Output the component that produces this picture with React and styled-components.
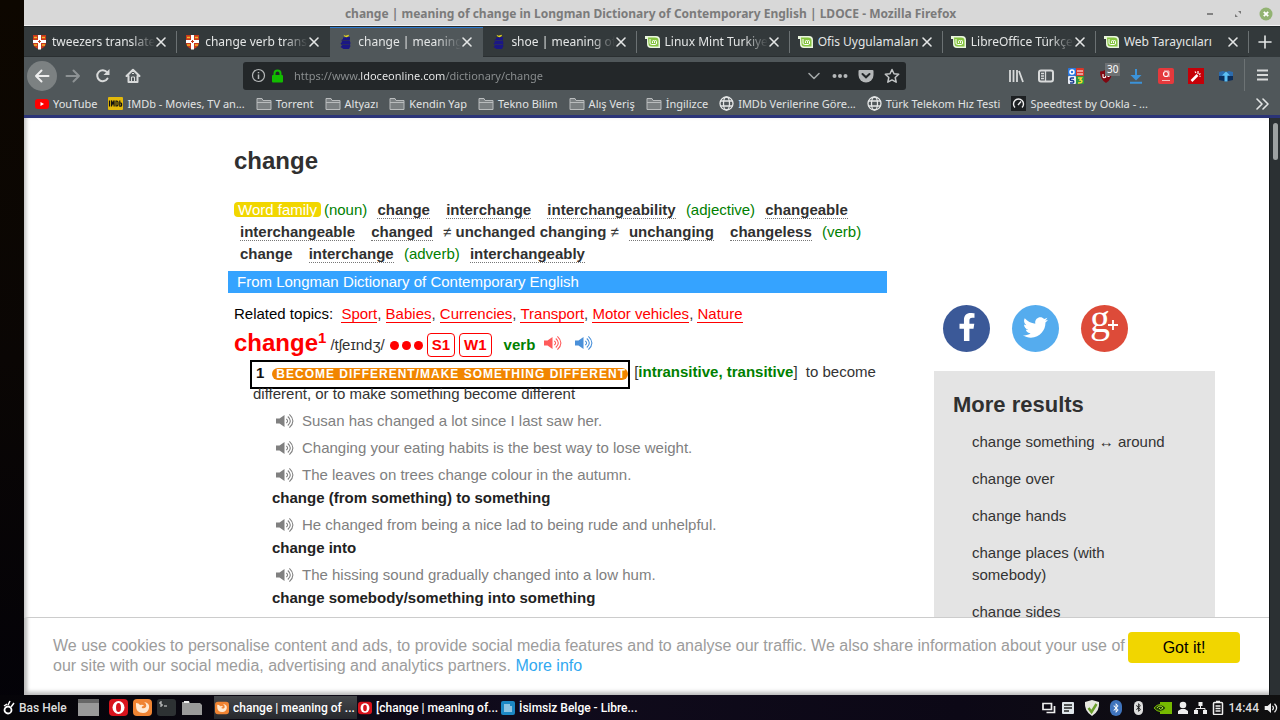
import React from "react";
import styled, { createGlobalStyle, css } from "styled-components";
import { FaFacebookF, FaTwitter, FaBluetoothB } from "react-icons/fa";

const ui = `"Noto Sans", sans-serif`;
const page = `"Liberation Sans", Arial, sans-serif`;

const Global = createGlobalStyle`
  * { box-sizing: border-box; }
  body { margin: 0; background: #050308; font-family: ${ui}; }
  button, input { font: inherit; color: inherit; }
  button { border: 0; padding: 0; background: none; cursor: pointer; }
  svg { display: block; flex: none; }
`;

const Desktop = styled.div`
  height: 100vh;
  display: flex;
  flex-direction: column;
  overflow: hidden;
  background: linear-gradient(#0d0700, #0a0604 50%, #030208);
`;
const Window = styled.div`
  flex: 1;
  min-height: 0;
  margin-left: 24px;
  display: flex;
  flex-direction: column;
  background: #fff;
`;

/* Title bar */
const TitleBar = styled.header`
  height: 26px;
  flex: none;
  display: flex;
  align-items: center;
  padding: 2px 7px 0 74px;
  background: #d8d8d8;
  border-bottom: 1px solid #f4f4f4;
  color: #7b7b7b;
`;
const WindowTitle = styled.div`
  flex: 1;
  text-align: center;
  font-size: 12px;
  line-height: 20px;
  font-weight: 700;
  white-space: nowrap;
`;
const WindowButtons = styled.div`
  display: flex;
  align-items: center;
  gap: 14px;
`;

/* Tabs */
const TabStrip = styled.nav`
  height: 31px;
  flex: none;
  display: flex;
  background: #33393b;
  border-top: 1px solid #22282a;
  color: #e4e6e6;
`;
const Tab = styled.div`
  flex: 1;
  min-width: 0;
  display: flex;
  align-items: center;
  padding: 0 10px 0 8px;
  position: relative;
  border-bottom: 1px solid #2a2f31;
  ${(p) => p.$active && css`
    background: #50575a;
    border-bottom-color: #50575a;
    box-shadow: inset 0 1px #2f7bd0;
  `}
  ${(p) => p.$line && css`
    &::after {
      content: "";
      position: absolute;
      right: 0;
      top: 4px;
      bottom: 3px;
      width: 1px;
      background: #6b7173;
    }
  `}
`;
const TabLabel = styled.button`
  flex: 1;
  min-width: 0;
  display: flex;
  align-items: center;
  gap: 5px;
`;
const TabText = styled.span`
  flex: 1;
  overflow: hidden;
  white-space: nowrap;
  text-align: left;
  font-size: 12px;
  line-height: 20px;
  ${(p) => p.$fade && "mask-image: linear-gradient(90deg, #000 calc(100% - 24px), transparent);"}
`;
const NewTab = styled.button`
  width: 31px;
  display: grid;
  place-items: center;
`;

/* Toolbar */
const Toolbar = styled.div`
  height: 37px;
  flex: none;
  display: flex;
  align-items: center;
  padding: 0 11px 0 3px;
  background: #50575a;
  color: #d8dada;
`;
const NavButtons = styled.div`
  display: flex;
  align-items: center;
  gap: 14px;
  width: 216px;
`;
const BackButton = styled.button`
  width: 30px;
  height: 30px;
  border-radius: 50%;
  background: #7c8182;
  display: grid;
  place-items: center;
  margin-right: -6px;
`;
const AddressBar = styled.div`
  flex: 1;
  height: 28px;
  display: flex;
  align-items: center;
  gap: 10px;
  padding: 0 6px 0 8px;
  border-radius: 3px;
  background: #232729;
`;
const SiteInfo = styled.div`
  display: flex;
  align-items: center;
  gap: 5px;
`;
const UrlInput = styled.input`
  flex: 1;
  min-width: 0;
  border: 0;
  padding: 0;
  outline: 0;
  font-size: 11px;
  line-height: 20px;
  color: transparent;
  background: linear-gradient(90deg, #8d9192 65px, #eff0f0 65px, #eff0f0 151px, #8d9192 151px);
  background-clip: text;
  -webkit-background-clip: text;
`;
const AddOns = styled.div`
  display: flex;
  align-items: center;
  gap: 14px;
  margin-left: 102px;
`;
const AddOn = styled.button`
  position: relative;
`;
const Badge = styled.span`
  position: absolute;
  left: 7px;
  top: -5px;
  padding: 0 2px;
  background: #6e7173;
  font-size: 10px;
  line-height: 13px;
  color: #fff;
`;
const MenuButton = styled.button`
  align-self: stretch;
  margin: 2px 0 3px 10px;
  padding-left: 11px;
  border-left: 1px solid #6d7375;
`;

const Bookmarks = styled.nav`
  height: 24px;
  flex: none;
  display: flex;
  align-items: center;
  gap: 11px;
  padding: 0 11px 2px;
  background: #50575a;
  border-bottom: 3px solid #2b3478;
  color: #e2e4e4;
`;
const Bookmark = styled.a`
  display: flex;
  align-items: center;
  gap: 4px;
  font-size: 11px;
  line-height: 18px;
  white-space: nowrap;
  color: inherit;
  text-decoration: none;
`;
const Overflow = styled.button`
  margin-left: auto;
`;

/* Page */
const Viewport = styled.div`
  flex: 1;
  min-height: 0;
  display: flex;
  background: #2b3033;
`;
const PageColumn = styled.div`
  flex: 1;
  min-width: 0;
  display: flex;
  flex-direction: column;
  background: #fff;
  font-family: ${page};
  box-shadow: inset 4px 0 4px -2px #bbb;
`;
const ScrollTrack = styled.div`
  width: 11px;
  padding: 5px 2px 0 3px;
  background: #2b3033;
  border-left: 1px solid #14181a;
`;
const ScrollThumb = styled.div`
  height: 37px;
  border-radius: 3px;
  background: #9da1a2;
`;
const Scroll = styled.main`
  flex: 1;
  min-height: 0;
  overflow: hidden;
  display: grid;
  grid-template-columns: minmax(0, 659fr) minmax(0, 281fr);
  column-gap: 47px;
  padding: 0 54px 0 204px;
  font-size: 15px;
  line-height: 22px;
  color: #333;
`;
const PageTitle = styled.h1`
  margin: 0;
  padding: 28px 0 23px 6px;
  font-size: 24px;
  line-height: 30px;
  color: #303030;
`;
const WordFamily = styled.div`
  padding-left: 6px;
  margin-bottom: 6px;
`;
const FamilyPill = styled.span`
  display: inline-block;
  line-height: 15px;
  padding: 0 4px;
  margin-right: 3px;
  border-radius: 4px;
  background: #f1d600;
  color: #fff;
`;
const Pos = styled.span`
  color: #008000;
`;
const FamilyWord = styled.a`
  margin: 0 6px;
  font-weight: 700;
  color: #303030;
  text-decoration: none;
  border-bottom: 1px dotted ${(p) => (p.$plain ? "transparent" : "#777")};
`;
const DictionaryBar = styled.div`
  padding-left: 9px;
  line-height: 22px;
  background: #35a3ff;
  color: #fff;
`;
const Topics = styled.div`
  padding: 10px 0 0 6px;
`;
const TopicsLabel = styled.span`
  margin-right: 4px;
  color: #000;
`;
const Topic = styled.a`
  color: #f00;
  text-decoration: none;
  border-bottom: 1px solid #f00;
`;
const Headword = styled.div`
  display: flex;
  align-items: center;
  height: 36px;
  padding-left: 6px;
`;
const Hyphenation = styled.h2`
  margin: 0;
  font-size: 24px;
  line-height: 28px;
  color: #f00;
  display: flex;
  align-items: flex-start;
`;
const Homograph = styled.sup`
  font-size: 15px;
  line-height: 18px;
`;
const Pron = styled.span`
  margin: 4px 5px 0 4px;
`;
const Dots = styled.span`
  display: flex;
  gap: 3px;
  margin: 4px 4px 0 0;
`;
const Dot = styled.i`
  width: 9px;
  height: 9px;
  border-radius: 50%;
  background: #f00;
`;
const Freq = styled.span`
  margin: 4px 4px 0 0;
  padding: 0 4px;
  border: 1px solid #f00;
  border-radius: 4px;
  font-weight: 700;
  color: #f00;
`;
const HeadPos = styled.span`
  margin: 4px 8px 0 8px;
  font-weight: 700;
  color: #008000;
`;
const SoundButton = styled.button`
  margin-right: ${(p) => (p.$color ? 11 : 7)}px;
  color: ${(p) => p.$color || "inherit"};
`;
const Sense = styled.div`
  padding-left: 25px;
`;
const SenseBox = styled.span`
  display: inline-flex;
  align-items: flex-start;
  vertical-align: top;
  height: 29px;
  margin: -1px 0 -6px -3px;
  padding-left: 4px;
  border: 2px solid #000;
  font-weight: 700;
  color: #111;
`;
const Signpost = styled.span`
  margin: 6px 0 0 8px;
  padding: 0 2px 0 4px;
  border-radius: 6px;
  background: #f18500;
  font-size: 12px;
  line-height: 12px;
  letter-spacing: 1px;
  color: #fff;
  white-space: nowrap;
`;
const Gram = styled.b`
  color: #008000;
`;
const Definition = styled.span`
  margin-left: 4px;
`;
const Example = styled.div`
  display: flex;
  align-items: center;
  margin-top: 5px;
  padding-left: 22px;
  color: #808080;
`;
const Pattern = styled.div`
  margin-top: 1px;
  padding-left: 19px;
  font-weight: 700;
  color: #222;
`;

const Sidebar = styled.aside`
  padding-top: 187px;
  display: flex;
  flex-direction: column;
  gap: 19px;
`;
const Shares = styled.div`
  display: flex;
  gap: 22px;
  padding-left: 9px;
`;
const Share = styled.a`
  width: 47px;
  height: 47px;
  border-radius: 50%;
  display: grid;
  place-items: center;
  padding-bottom: ${(p) => p.$lift || 0}px;
  background: ${(p) => p.$color};
  color: #fff;
`;
const MoreResults = styled.section`
  flex: 1 0 auto;
  padding: 19px;
  background: #e4e4e4;
`;
const MoreTitle = styled.h2`
  margin: 0 0 12px;
  font-size: 22px;
  line-height: 29px;
  color: #303030;
`;
const Results = styled.ul`
  list-style: none;
  margin: 0;
  padding: 0 24px 0 19px;
  display: flex;
  flex-direction: column;
  gap: 15px;
`;
const ResultLink = styled.a`
  color: inherit;
  text-decoration: none;
`;

const CookieBar = styled.div`
  height: 78px;
  flex: none;
  display: flex;
  align-items: flex-start;
  gap: 1px;
  padding: 14px 29px 0;
  border-top: 1px solid #ccc;
  font-size: 16px;
  line-height: 20px;
  color: #9c9c9c;
  box-shadow: inset 4px -5px 4px -2px #bbb;
`;
const CookieText = styled.p`
  margin: 4px 0 0;
  flex: 1;
`;
const MoreInfo = styled.a`
  color: #31a8f0;
  text-decoration: none;
`;
const Accept = styled.button`
  width: 112px;
  height: 31px;
  border-radius: 4px;
  background: #f1d600;
  color: #000;
`;

/* Desktop panel */
const Taskbar = styled.footer`
  height: 25px;
  flex: none;
  display: flex;
  align-items: center;
  padding: 0 2px 0 2px;
  background: linear-gradient(90deg, #050408, #100b1c 40%, #0c0816 75%, #101010);
  font-family: Roboto, ${ui};
  font-size: 12px;
  font-weight: 500;
  color: #dedede;
`;
const StartButton = styled.button`
  display: flex;
  align-items: center;
  gap: 4px;
  width: 76px;
  white-space: nowrap;
`;
const Launchers = styled.div`
  display: flex;
  align-items: center;
  gap: 5px;
  width: 136px;
`;
const Task = styled.button`
  width: 143px;
  height: 23px;
  display: flex;
  align-items: center;
  gap: 4px;
  padding: 0 1px;
  white-space: nowrap;
  color: #fff;
  background: ${(p) => (p.$active ? "linear-gradient(#45474b, #26282d)" : "none")};
`;
const Tray = styled.div`
  margin-left: auto;
  display: flex;
  align-items: center;
  gap: 5px;
`;

const Svg = ({ w = 16, h = w, vb = `0 0 ${w} ${h}`, children, ...rest }) => (
  <svg width={w} height={h} viewBox={vb} fill="none" aria-hidden="true" {...rest}>{children}</svg>
);
const stroke = { stroke: "currentColor", strokeWidth: 2, strokeLinecap: "round", strokeLinejoin: "round" };

const Cross = () => <Svg w={12}><path d="M2 2l8 8M10 2l-8 8" {...stroke} strokeWidth="1.6" /></Svg>;
const Speaker = () => (
  <Svg w={20} h={16}>
    <path d="M1 5.500h3.500L9.500 2v12l-5-3.500H1z" fill="currentColor" />
    <path d="M11.300 5.800q2.600 2.200 0 4.400M12.800 3.500q5 4.500 0 9M14.400 1.400q7 6.600 0 13.200" stroke="currentColor" strokeWidth="1.100" />
  </Svg>
);
const Shield = () => (
  <Svg w={15} h={16}>
    <path d="M1 1h13v8q0 4-6.500 6.500Q1 13 1 9z" fill="#c8391b" />
    <path d="M6 1h3v14.500H6zM1 6h13v3H1z" fill="#fff" />
    <path d="M2 3.500h3M10 3.500h3M2 11h3M10 11h3" stroke="#f3b82d" strokeWidth="1.600" />
    <path d="M7.500 6v3M6 7.500h3" stroke="#c8391b" />
  </Svg>
);
const Ship = () => (
  <Svg w={15} h={16}>
    <path d="M5 3.500l7-.500v2.500l-.500.500 1 3-.500 2 .500 1-1.500 3H5.500L2.500 13l1.500-1.500-1.500-2L4 8l-.500-2L5 5z" fill="#1b1784" />
    <path d="M4 6.500h7M3.500 10.500h8" stroke="#2f3352" strokeWidth=".800" />
    <path d="M5.500.800l2 1 3.500-1-.500 1.400-2 1-2-.700z" fill="#e8d81c" />
  </Svg>
);
const Mint = () => (
  <Svg w={15} h={13}>
    <path d="M0 1h11q4 0 4 4v8H6q-4 0-4-4V4H0z" fill="#e9f5dc" />
    <path d="M3 2.500h7q3.500 0 3.500 3v6h-7q-3 0-3-3z" fill="#86c440" />
    <path d="M5 4v4q0 1.500 1.500 1.500h4q1 0 1-1.500V6.500q0-1-1-1t-1 1V8M9.500 6.500q0-1-1-1t-1 1V8" stroke="#fff" />
  </Svg>
);
const Folder = () => (
  <Svg w={16} h={14}>
    <path d="M1 12.500v-11h5l1 2h8v9z" fill="#7b8082" stroke="#b9bcbd" />
    <path d="M1 5.500h14" stroke="#b9bcbd" />
  </Svg>
);
const Globe = () => (
  <Svg w={15}>
    <g stroke="#e4e6e6" strokeWidth="1.300"><circle cx="7.500" cy="7.500" r="6.500" /><ellipse cx="7.500" cy="7.500" rx="3" ry="6.500" /><path d="M1.500 5h12M1.500 10h12" /></g>
  </Svg>
);
const YouTube = () => <Svg w={14} h={10}><rect width="14" height="10" rx="3" fill="#f00" /><path d="M5.500 3v4l3.500-2z" fill="#fff" /></Svg>;
const Imdb = () => (
  <Svg w={15} h={13}>
    <rect width="15" height="13" rx="1" fill="#e3b90b" />
    <path d="M1.500 3.500v6M3.500 9.500v-6l1.300 3.500 1.300-3.500v6M8 4v5h.700q1.300 0 1.300-1.300V5.300Q10 4 8.700 4zM11.800 3.500v5.700h1q.800 0 .800-.800V6.800q0-.800-.800-.800h-1" stroke="#111" strokeWidth="1.200" />
  </Svg>
);
const Gauge = () => (
  <Svg w={15}>
    <rect width="15" height="15" fill="#1d2022" />
    <path d="M4 11.500a5 5 0 1 1 7 0M7 9l3-3.500" stroke="#eee" strokeWidth="1.400" />
  </Svg>
);
const Opera = ({ w = 19 }) => (
  <Svg w={w} vb="0 0 19 19">
    <rect y="1" width="19" height="17" rx="4" fill="#d8131c" />
    <ellipse cx="9.500" cy="9.500" rx="6" ry="6.500" fill="#fff" /><ellipse cx="9.500" cy="9.500" rx="2.500" ry="4.500" fill="#d8131c" />
  </Svg>
);
const Fox = ({ w = 19 }) => (
  <Svg w={w} vb="0 0 19 19">
    <rect y="1" width="19" height="17" rx="4" fill="#f08433" />
    <path d="M3 5q3 0 4 2 3-1 4 1-3 0-2 2 2 1 4-1 1-3-2-5 6 1 5 6-1 5-6 5-7 0-7-7z" fill="#ffe9d2" />
  </Svg>
);

const tabs = [
  { label: "tweezers translate", Icon: Shield, line: true, fade: true },
  { label: "change verb trans", Icon: Shield, fade: true },
  { label: "change | meaning", Icon: Ship, active: true, fade: true },
  { label: "shoe | meaning of", Icon: Ship, line: true, fade: true },
  { label: "Linux Mint Turkiye", Icon: Mint, line: true, fade: true },
  { label: "Ofis Uygulamaları", Icon: Mint, line: true },
  { label: "LibreOffice Türkçe", Icon: Mint, line: true, fade: true },
  { label: "Web Tarayıcıları", Icon: Mint, line: true },
];
const bookmarks = [
  ["YouTube", YouTube], ["IMDb - Movies, TV an...", Imdb], ["Torrent", Folder], ["Altyazı", Folder],
  ["Kendin Yap", Folder], ["Tekno Bilim", Folder], ["Alış Veriş", Folder], ["İngilizce", Folder],
  ["IMDb Verilerine Göre...", Globe], ["Türk Telekom Hız Testi", Globe], ["Speedtest by Ookla - ...", Gauge],
];
const family = [
  ["p", "(noun)"], ["w", "change"], ["w", "interchange"], ["w", "interchangeability"], ["p", "(adjective)"],
  ["w", "changeable"], ["w", "interchangeable"], ["w", "changed"], ["t", "≠"], ["b", "unchanged"], ["b", "changing"],
  ["t", "≠"], ["w", "unchanging"], ["w", "changeless"], ["p", "(verb)"], ["n", "change"], ["w", "interchange"],
  ["p", "(adverb)"], ["w", "interchangeably"],
];
const topics = ["Sport", "Babies", "Currencies", "Transport", "Motor vehicles", "Nature"];
const entries = [
  [1, "Susan has changed a lot since I last saw her."],
  [1, "Changing your eating habits is the best way to lose weight."],
  [1, "The leaves on trees change colour in the autumn."],
  [0, "change (from something) to something"],
  [1, "He changed from being a nice lad to being rude and unhelpful."],
  [0, "change into"],
  [1, "The hissing sound gradually changed into a low hum."],
  [0, "change somebody/something into something"],
];
const results = ["change something ↔ around", "change over", "change hands", "change places (with somebody)", "change sides"];

function FamilyItem({ kind, text }) {
  if (kind === "p") return <Pos>{text}</Pos>;
  if (kind === "w" || kind === "n") return <FamilyWord href="#" $plain={kind === "n"}>{text}</FamilyWord>;
  return kind === "b" ? <b>{text}</b> : <span>{text}</span>;
}

function BrowserChrome() {
  return (
    <>
      <TitleBar>
        <WindowTitle>change | meaning of change in Longman Dictionary of Contemporary English | LDOCE - Mozilla Firefox</WindowTitle>
        <WindowButtons>
          <button aria-label="Minimise"><Svg w={14}><path d="M4 7h6" stroke="#666" strokeWidth="1.500" /></Svg></button>
          <button aria-label="Restore"><Svg w={14}><path d="M7 4h3v3zM4 7v3h3z" fill="#777" /></Svg></button>
          <button aria-label="Close window"><Svg w={14}><circle cx="7" cy="7" r="6.500" fill="#92b372" /><path d="M4.800 4.800l4.400 4.400M9.200 4.800l-4.400 4.400" stroke="#fff" strokeWidth="1.800" /></Svg></button>
        </WindowButtons>
      </TitleBar>
      <TabStrip aria-label="Tabs">
        {tabs.map(({ label, Icon, line, active, fade }) => (
          <Tab key={label} $active={active} $line={line}>
            <TabLabel><Icon /><TabText $fade={fade}>{label}</TabText></TabLabel>
            <button aria-label={`Close ${label}`}><Cross /></button>
          </Tab>
        ))}
        <NewTab aria-label="New tab"><Svg w={14}><path d="M7 1v12M1 7h12" {...stroke} strokeWidth="1.600" /></Svg></NewTab>
      </TabStrip>
      <Toolbar>
        <NavButtons>
          <BackButton aria-label="Back"><Svg><path d="M14.500 8H2M7.500 2.500L2 8l5.500 5.500" {...stroke} stroke="#eee" /></Svg></BackButton>
          <button aria-label="Forward"><Svg><path d="M1.500 8H14M8.500 2.500L14 8l-5.500 5.500" {...stroke} stroke="#8d9294" /></Svg></button>
          <button aria-label="Reload"><Svg><path d="M12.500 10.500A5.500 5.500 0 1 1 12 4.200" {...stroke} /><path d="M14.500 1v6h-6z" fill="currentColor" /></Svg></button>
          <button aria-label="Home"><Svg><path d="M1.500 8L8 1.800 14.500 8M3.500 8v6h9V8" {...stroke} /><path d="M6.500 14V9h3v5z" stroke="currentColor" /><path d="M7 5.500h2" stroke="currentColor" /></Svg></button>
        </NavButtons>
        <AddressBar>
          <SiteInfo>
            <Svg w={15}><circle cx="7.500" cy="7.500" r="6" stroke="#b5b8b9" strokeWidth="1.200" /><path d="M7.500 6.500v4.500M7.500 4v1.300" stroke="#b5b8b9" strokeWidth="1.500" /></Svg>
            <Svg w={13} h={14}><rect x="1" y="6" width="11" height="7.500" rx="1" fill="#12bc00" /><path d="M3.500 7V4.500a3 3 0 0 1 6 0V7" stroke="#12bc00" strokeWidth="2" /></Svg>
          </SiteInfo>
          <UrlInput aria-label="Address" defaultValue="https://www.ldoceonline.com/dictionary/change" />
          <button aria-label="History"><Svg><path d="M3 5.500l5 5 5-5" {...stroke} stroke="#a2a6a7" strokeWidth="1.600" /></Svg></button>
          <button aria-label="Page actions"><Svg><g fill="#b5b8b9"><circle cx="2.500" cy="8" r="2" /><circle cx="8" cy="8" r="2" /><circle cx="13.500" cy="8" r="2" /></g></Svg></button>
          <button aria-label="Save to Pocket"><Svg><path d="M1.500 2h13q1 0 1 1v4a7.500 7.500 0 0 1-15 0V3q0-1 1-1z" fill="#b5b8b9" /><path d="M4.500 6L8 9.300 11.500 6" stroke="#232729" strokeWidth="2" strokeLinecap="round" /></Svg></button>
          <button aria-label="Bookmark this page"><Svg><path d="M8 1.500l2 4.300 4.700.500-3.500 3.200 1 4.700L8 11.900l-4.200 2.300 1-4.700L1.300 6.300 6 5.800z" {...stroke} stroke="#c4c7c8" strokeWidth="1.500" /></Svg></button>
        </AddressBar>
        <AddOns>
          <AddOn aria-label="Library"><Svg><path d="M2 2v12M5.500 2v12M9 2v12M11 3l4 11" stroke="currentColor" strokeWidth="1.800" /></Svg></AddOn>
          <AddOn aria-label="Sidebars"><Svg><rect x="1" y="2.500" width="14" height="11" rx="2" {...stroke} /><path d="M7.500 3v10M3 5.500h3M3 8h3M3 10.500h3" stroke="currentColor" strokeWidth="1.300" /></Svg></AddOn>
          <AddOn aria-label="Translator">
            <Svg><rect width="8" height="8" rx="1" fill="#2b79e0" /><rect x="8" width="8" height="8" rx="1" fill="#d7372b" /><rect y="8" width="8" height="8" rx="1" fill="#e9edf5" /><rect x="8" y="8" width="8" height="8" rx="1" fill="#2f9a41" />
              <circle cx="4" cy="4" r="2" stroke="#fff" strokeWidth="1.500" /><path d="M9 3h6M9 6h6" stroke="#fff" /><path d="M6 10H3.500a1 1 0 0 0 0 2.500h1a1 1 0 0 1 0 2.500H2" stroke="#183a8c" strokeWidth="1.500" /><path d="M10 10h3.500l-1.500 2q2 0 2 1.500T10 15" stroke="#f5d92e" strokeWidth="1.400" /></Svg>
          </AddOn>
          <AddOn aria-label="uBlock, 30 blocked">
            <Svg><path d="M8 1.500q3 2 6 2 0 8-6 11.500Q2 11.500 2 3.500q3 0 6-2z" fill="#800610" /><path d="M5 6v2.500q0 1.300 1.300 1.300T7.600 8.500V6v3.800M9.500 8.500h2" stroke="#fff" strokeWidth="1.100" /></Svg>
            <Badge>30</Badge>
          </AddOn>
          <AddOn aria-label="Downloads"><Svg><path d="M8 1v8M2 14.800h12" stroke="#3b93d9" strokeWidth="2" /><path d="M2.500 7h11L8 12.500z" fill="#3b93d9" /></Svg></AddOn>
          <AddOn aria-label="Site search"><Svg><rect width="16" height="16" rx="2" fill="#e5393c" /><circle cx="8" cy="6" r="2.500" stroke="#fff" strokeWidth="1.200" /><path d="M6 3h5v6M4 12.500h8" stroke="#f6bcbc" /></Svg></AddOn>
          <AddOn aria-label="Magic actions"><Svg><rect width="16" height="16" fill="#c50008" /><path d="M3.500 13l6-6" stroke="#fff" strokeWidth="2.500" /><path d="M10 3v3M12.500 5.500l-1.500 1M7 3.500l1 1.500M12.500 8.500l-1-.500" stroke="#fff" strokeWidth="1.200" /></Svg></AddOn>
          <AddOn aria-label="Video download"><Svg><path d="M1 4l4-1 3 1 3-1 4 1v7l-7 2-7-2z" fill="#2c6cae" /><path d="M1 8h14v4l-7 1.500L1 12z" fill="#0b2e5d" /><path d="M4 7.500L8 3.500l4 4h-2.500v6h-3v-6z" fill="#5cc0f5" /></Svg></AddOn>
        </AddOns>
        <MenuButton aria-label="Menu"><Svg w={13} h={14}><path d="M1 2.500h11M1 7h11M1 11.500h11" stroke="currentColor" strokeWidth="1.800" /></Svg></MenuButton>
      </Toolbar>
      <Bookmarks aria-label="Bookmarks">
        {bookmarks.map(([label, Icon]) => <Bookmark key={label} href="#"><Icon />{label}</Bookmark>)}
        <Overflow aria-label="More bookmarks"><Svg w={14}><path d="M2 2l5 5-5 5M8 2l5 5-5 5" {...stroke} strokeWidth="1.600" /></Svg></Overflow>
      </Bookmarks>
    </>
  );
}

function Entry() {
  return (
    <article>
      <PageTitle>change</PageTitle>
      <WordFamily>
        <FamilyPill>Word family</FamilyPill>
        {family.map(([kind, text], i) => <React.Fragment key={i}><FamilyItem kind={kind} text={text} />{" "}</React.Fragment>)}
      </WordFamily>
      <DictionaryBar>From Longman Dictionary of Contemporary English</DictionaryBar>
      <Topics>
        <TopicsLabel>Related topics:</TopicsLabel>{" "}
        {topics.map((t, i) => <React.Fragment key={t}>{i > 0 && ", "}<Topic href="#">{t}</Topic></React.Fragment>)}
      </Topics>
      <Headword>
        <Hyphenation>change<Homograph>1</Homograph></Hyphenation>
        <Pron>/tʃeɪndʒ/</Pron>
        <Dots><Dot /><Dot /><Dot /></Dots>
        <Freq>S1</Freq><Freq>W1</Freq>
        <HeadPos>verb</HeadPos>
        <SoundButton $color="#ff5b5b" aria-label="British pronunciation"><Speaker /></SoundButton>
        <SoundButton $color="#4a90d9" aria-label="American pronunciation"><Speaker /></SoundButton>
      </Headword>
      <Sense>
        <SenseBox>1<Signpost>BECOME DIFFERENT/MAKE SOMETHING DIFFERENT</Signpost></SenseBox>{" "}
        [<Gram>intransitive, transitive</Gram>]{" "}
        <Definition>to become different, or to make something become different</Definition>
        {entries.map(([example, text]) => example
          ? <Example key={text}><SoundButton aria-label="Play example"><Speaker /></SoundButton>{text}</Example>
          : <Pattern key={text}>{text}</Pattern>)}
      </Sense>
    </article>
  );
}

function Panel() {
  return (
    <Taskbar>
      <StartButton>
        <Svg w={13} h={16}><circle cx="6" cy="10" r="3.500" stroke="#fff" strokeWidth="1.800" /><path d="M2 6l3-2M6 5l2-4M9 7l3-4" stroke="#fff" strokeWidth="1.500" /></Svg>
        Bas Hele
      </StartButton>
      <Launchers>
        <button aria-label="Show desktop"><Svg w={21} h={18}><rect width="21" height="17" fill="#999" /><path d="M0 0h21v4H0z" fill="#666" /></Svg></button>
        <span />
        <button aria-label="Opera"><Opera /></button>
        <button aria-label="Firefox"><Fox /></button>
        <button aria-label="Terminal"><Svg w={19}><rect y="1" width="19" height="17" rx="3" fill="#2d3133" /><path d="M5 4H3v2h2v2H3M7 8h3" stroke="#ddd" /></Svg></button>
        <button aria-label="Files"><Svg w={21} h={16}><path d="M1 4V2h2V1h5l1 2h10l2 2v10H1z" fill="#9a9a9a" /><path d="M3 1h5v2H3z" fill="#eee" /></Svg></button>
      </Launchers>
      <Task $active><Fox w={14} />change | meaning of ...</Task>
      <Task><Opera w={14} />[change | meaning of...</Task>
      <Task><Svg w={14}><rect width="14" height="14" rx="2" fill="#1c88c4" /><path d="M3 4h6M3 6h8M3 8h8M3 10h8" stroke="#fff" /></Svg>İsimsiz Belge - Libre...</Task>
      <Tray>
        <Svg w={14} h={12}><path d="M1 1.500h8.500v6H1zM12.500 4v6.500H4.500" stroke="#eee" strokeWidth="1.700" /></Svg>
        <Svg w={14}><rect x="1" y="1" width="12" height="12" rx="1" fill="#dfe5ea" /><path d="M3 4h8M3 7h8M3 10h5" stroke="#222" strokeWidth="1.400" /></Svg>
        <Svg w={24} h={18}><path d="M12 1l7 2q1 9-7 14Q4 12 5 3z" fill="#e8e8e0" /><path d="M8.500 9l3 4 5-8" stroke="#6b9f2b" strokeWidth="2.500" /></Svg>
        <Svg w={14} h={18}><rect x="1" y="1" width="12" height="16" rx="6" fill="#3f74bd" /><g color="#fff"><FaBluetoothB x="2" y="4" size={10} /></g></Svg>
        <Svg w={20} h={16}><rect x="6" y="1" width="9" height="14" rx="4.500" fill="#ddd" /><g color="#111"><FaBluetoothB x="6" y="3" size={9} /></g></Svg>
        <Svg w={19} h={14}><path d="M7 1h12v12H7z" fill="#76b900" /><path d="M1 7q6-7 12 0-6 7-12 0z" fill="#26400a" stroke="#76b900" /><path d="M4 7q3-4 6 0-3 3-4 0" stroke="#a5e02e" /></Svg>
        <Svg w={12} h={14}><circle cx="6" cy="4" r="3.300" fill="#eee" /><path d="M1 13V10l3-2h4l3 2v3z" fill="#eee" /></Svg>
        <Svg w={13} h={14}><path d="M4.500 1h4v4h-4zM0 9h4v4H0zM9 9h4v4H9z" fill="#eee" /><path d="M6.500 5v2.500M2 9V7.500h9V9" stroke="#eee" /></Svg>
        <Svg w={12} h={15}><rect x="1.500" y="2.500" width="9" height="12" rx="1" stroke="#eee" strokeWidth="1.500" /><path d="M4 1.500h4M3.500 6h5M3.500 8.500h5M3.500 11h5" stroke="#eee" strokeWidth="1.500" /></Svg>
        <time>14:44</time>
        <Svg w={14} vb="0 0 20 16" h={12}><path d="M1 5h4l5-4v14l-5-4H1z" fill="#eee" /><path d="M12 5q3 3 0 6M15 2q6 6 0 12" stroke="#eee" strokeWidth="1.800" /></Svg>
      </Tray>
    </Taskbar>
  );
}

export default function App() {
  return (
    <>
      <Global />
      <Desktop>
        <Window>
          <BrowserChrome />
          <Viewport>
            <PageColumn>
              <Scroll>
                <Entry />
                <Sidebar>
                  <Shares>
                    <Share href="#" $color="#3b5998" $lift={3} aria-label="Facebook"><FaFacebookF size={28} /></Share>
                    <Share href="#" $color="#55acee" $lift={3} aria-label="Twitter"><FaTwitter size={25} /></Share>
                    <Share href="#" $color="#dd4b39" aria-label="Google+">
                      <Svg w={47}><text x="9" y="27" fontFamily="Liberation Serif, serif" fontSize="40" fill="#fff">g</text><path d="M27 20h10M32 15v10" stroke="#fff" strokeWidth="1.800" /></Svg>
                    </Share>
                  </Shares>
                  <MoreResults>
                    <MoreTitle>More results</MoreTitle>
                    <Results>{results.map((r) => <li key={r}><ResultLink href="#">{r}</ResultLink></li>)}</Results>
                  </MoreResults>
                </Sidebar>
              </Scroll>
              <CookieBar>
                <CookieText>
                  We use cookies to personalise content and ads, to provide social media features and to analyse our traffic. We also share information about your use of our site with our social media, advertising and analytics partners. <MoreInfo href="#">More info</MoreInfo>
                </CookieText>
                <Accept>Got it!</Accept>
              </CookieBar>
            </PageColumn>
            <ScrollTrack><ScrollThumb /></ScrollTrack>
          </Viewport>
        </Window>
        <Panel />
      </Desktop>
    </>
  );
}
